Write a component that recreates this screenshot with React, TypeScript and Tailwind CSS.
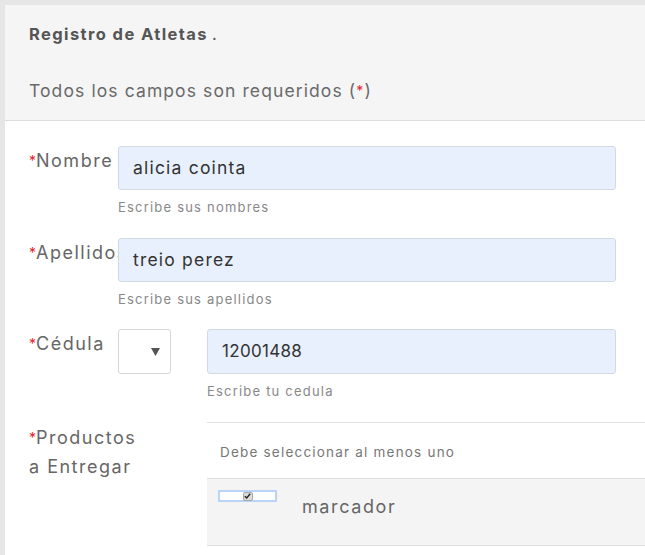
import React from "react";

function Req() {
  return <span className="text-[#e0262b] text-[14px] align-top tracking-normal">*</span>;
}

const label = "text-[18px] tracking-[1.5px] leading-[29px] text-[#666]";
const help = "mt-[9px] text-[13px] tracking-[1.2px] leading-[16px] text-[#888]";
const input =
  "border border-[#d3d9e2] rounded-[3px] bg-[#e8f0fe] px-[14px] flex items-center text-[#333]";

export default function App() {
  return (
    <div className="min-h-[555px] h-[555px] overflow-hidden bg-[#e6e6e6] pl-[5px] pt-[5px] font-['Inter',sans-serif]">
      <div className="bg-white h-full">
        <div className="bg-[#f5f5f5] border-b border-[#dddddd] px-[24px]">
          <div className="h-[58px] flex items-center text-[16.5px] tracking-[1.4px] font-bold text-[#555]">
            Registro de Atletas<span className="font-normal ml-[4px]">.</span>
          </div>
          <div className="h-[57px] flex items-center text-[17.5px] tracking-[1.1px] text-[#6a6a6a]">
            Todos los campos son requeridos (<span className="text-[#e0262b] text-[14px] relative top-[-1px]">*</span>)
          </div>
        </div>

        <div className="pl-[24px] pt-[25px]">
          {/* Nombre */}
          <div className="flex mb-[23px]">
            <div className={`w-[89px] shrink-0 whitespace-nowrap ${label}`}>
              <Req />Nombre
            </div>
            <div className="w-[498px]">
              <div className={`h-[44px] text-[17.5px] tracking-[1.2px] ${input}`}>alicia cointa</div>
              <div className={help}>Escribe sus nombres</div>
            </div>
          </div>

          {/* Apellidos */}
          <div className="flex mb-[22px]">
            <div className={`w-[89px] shrink-0 whitespace-nowrap ${label}`}>
              <Req />Apellidos
            </div>
            <div className="w-[498px]">
              <div className={`h-[44px] text-[17.5px] tracking-[1.2px] ${input}`}>treio perez</div>
              <div className={help}>Escribe sus apellidos</div>
            </div>
          </div>

          {/* Cedula */}
          <div className="flex mb-[23px]">
            <div className={`w-[89px] shrink-0 whitespace-nowrap ${label}`}>
              <Req />Cédula
            </div>
            <div className="w-[53px] h-[45px] shrink-0 border border-[#d6d6d6] rounded-[3px] bg-white flex items-center justify-end pr-[10px]">
              <svg width="9" height="8" viewBox="0 0 9 8">
                <path d="M0 0 H9 L4.5 8 Z" fill="#555" />
              </svg>
            </div>
            <div className="w-[409px] ml-[36px]">
              <div className={`h-[45px] text-[17px] tracking-[0.3px] ${input}`}>12001488</div>
              <div className={help}>Escribe tu cedula</div>
            </div>
          </div>

          {/* Productos */}
          <div className="flex">
            <div className={`w-[178px] shrink-0 pt-[1px] whitespace-nowrap ${label}`}>
              <div>
                <Req />Productos
              </div>
              <div>a Entregar</div>
            </div>
            <div className="flex-1 border-t border-[#e2e2e2]">
              <div className="h-[55px] flex items-center pl-[13px] pt-[4px] text-[13.5px] tracking-[1.2px] text-[#777]">
                Debe seleccionar al menos uno
              </div>
              <div className="h-[68px] bg-[#f4f4f4] border-y border-[#e2e2e2] flex items-start pl-[11px] pt-[11px]">
                <div className="w-[59px] h-[12px] border-2 border-[#b9d4f6] bg-white flex items-center justify-center">
                  <div className="w-[10px] h-[9px] bg-[#dcdcdc] border border-[#a8a8a8] rounded-[2px] flex items-center justify-center">
                    <svg width="7" height="6" viewBox="0 0 7 6">
                      <path d="M0.8 3.2 L2.7 5 L6.2 0.8" stroke="#222" strokeWidth="1.4" fill="none" />
                    </svg>
                  </div>
                </div>
                <div className="ml-[25px] mt-[3px] text-[18px] tracking-[1.6px] text-[#666]">marcador</div>
              </div>
            </div>
          </div>
        </div>
      </div>
    </div>
  );
}
